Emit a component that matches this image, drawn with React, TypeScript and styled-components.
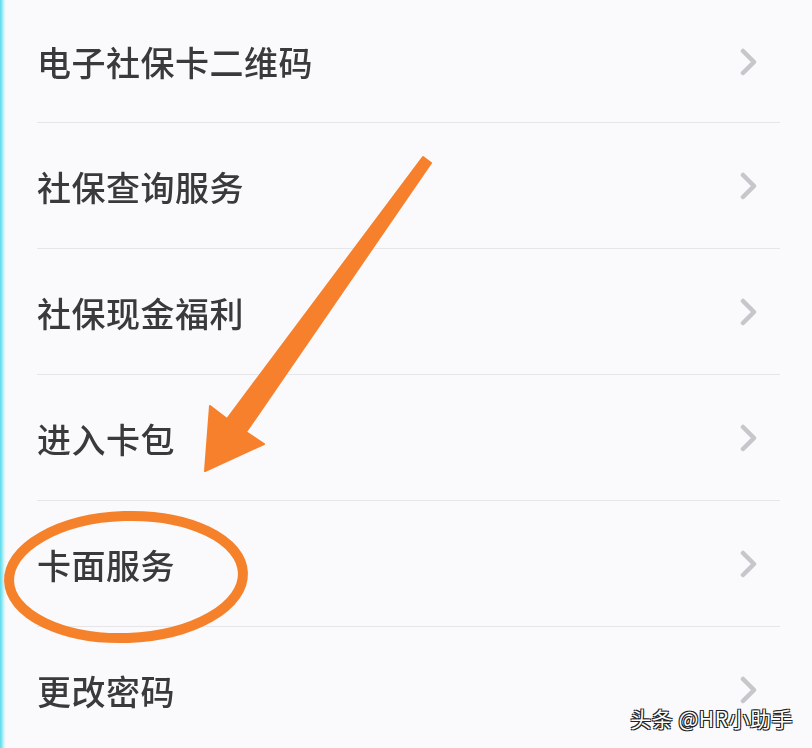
import React from 'react';
import styled, { createGlobalStyle } from 'styled-components';

const GlobalStyle = createGlobalStyle`
  html, body {
    margin: 0;
    padding: 0;
    background: #faf9fb;
  }
`;

const Page = styled.div`
  position: relative;
  width: 812px;
  height: 748px;
  overflow: hidden;
  background: linear-gradient(to right, #5cdbec 0, #8fe7f2 2px, #d6f5f9 4px, #faf9fb 6px);
  font-family: "Noto Sans CJK SC", "Noto Sans", sans-serif;
`;

const List = styled.div`
  display: flex;
  flex-direction: column;
  padding-left: 37px;
  padding-right: 32px;
`;

const Row = styled.div<{ $height: number }>`
  display: flex;
  align-items: center;
  justify-content: space-between;
  height: ${(p) => p.$height}px;
  box-sizing: border-box;
  border-bottom: 1px solid #e6e5e8;
  padding-top: 1px;
  flex-shrink: 0;
`;

const Label = styled.span`
  font-size: 34px;
  font-weight: 500;
  color: #3a3a3c;
  letter-spacing: 0.5px;
  filter: blur(0.6px);
`;

const Chevron = styled.svg`
  width: 18px;
  height: 28px;
  margin-right: 22px;
  filter: blur(0.5px);
`;

const Overlay = styled.svg`
  position: absolute;
  left: 0;
  top: 0;
  width: 812px;
  height: 748px;
  pointer-events: none;
`;

const Watermark = styled.div`
  position: absolute;
  right: 19px;
  bottom: 15px;
  font-family: "Noto Sans CJK SC", "Noto Sans", sans-serif;
  font-size: 21px;
  color: #ffffff;
  text-shadow: 1px 1px 0 #222, -1px -1px 0 #222, 1px -1px 0 #222, -1px 1px 0 #222;
  letter-spacing: 0.5px;
`;

const items = [
  { label: '电子社保卡二维码', height: 123 },
  { label: '社保查询服务', height: 126 },
  { label: '社保现金福利', height: 126 },
  { label: '进入卡包', height: 126 },
  { label: '卡面服务', height: 126 },
  { label: '更改密码', height: 126 },
];

const Arrow = () => (
  <Chevron viewBox="0 0 18 28">
    <path d="M3 3 L14 14 L3 25" fill="none" stroke="#c6c6cb" strokeWidth="4.5" strokeLinecap="round" strokeLinejoin="round" />
  </Chevron>
);

const App = () => (
  <Page>
    <GlobalStyle />
    <List>
      {items.map((it) => (
        <Row key={it.label} $height={it.height}>
          <Label>{it.label}</Label>
          <Arrow />
        </Row>
      ))}
    </List>
    <Overlay viewBox="0 0 812 748">
      <polygon
        points="431,163 246,432 264,444 205,471 210,406 227,419 423,157"
        fill="#f6802c"
        stroke="#f6802c"
        strokeWidth="2"
        strokeLinejoin="round"
      />
      <ellipse
        cx="126"
        cy="577"
        rx="117"
        ry="61"
        fill="none"
        stroke="#f5812b"
        strokeWidth="10"
        transform="rotate(-2 126 577)"
      />
    </Overlay>
    <Watermark>头条 @HR小助手</Watermark>
  </Page>
);

export default App;
